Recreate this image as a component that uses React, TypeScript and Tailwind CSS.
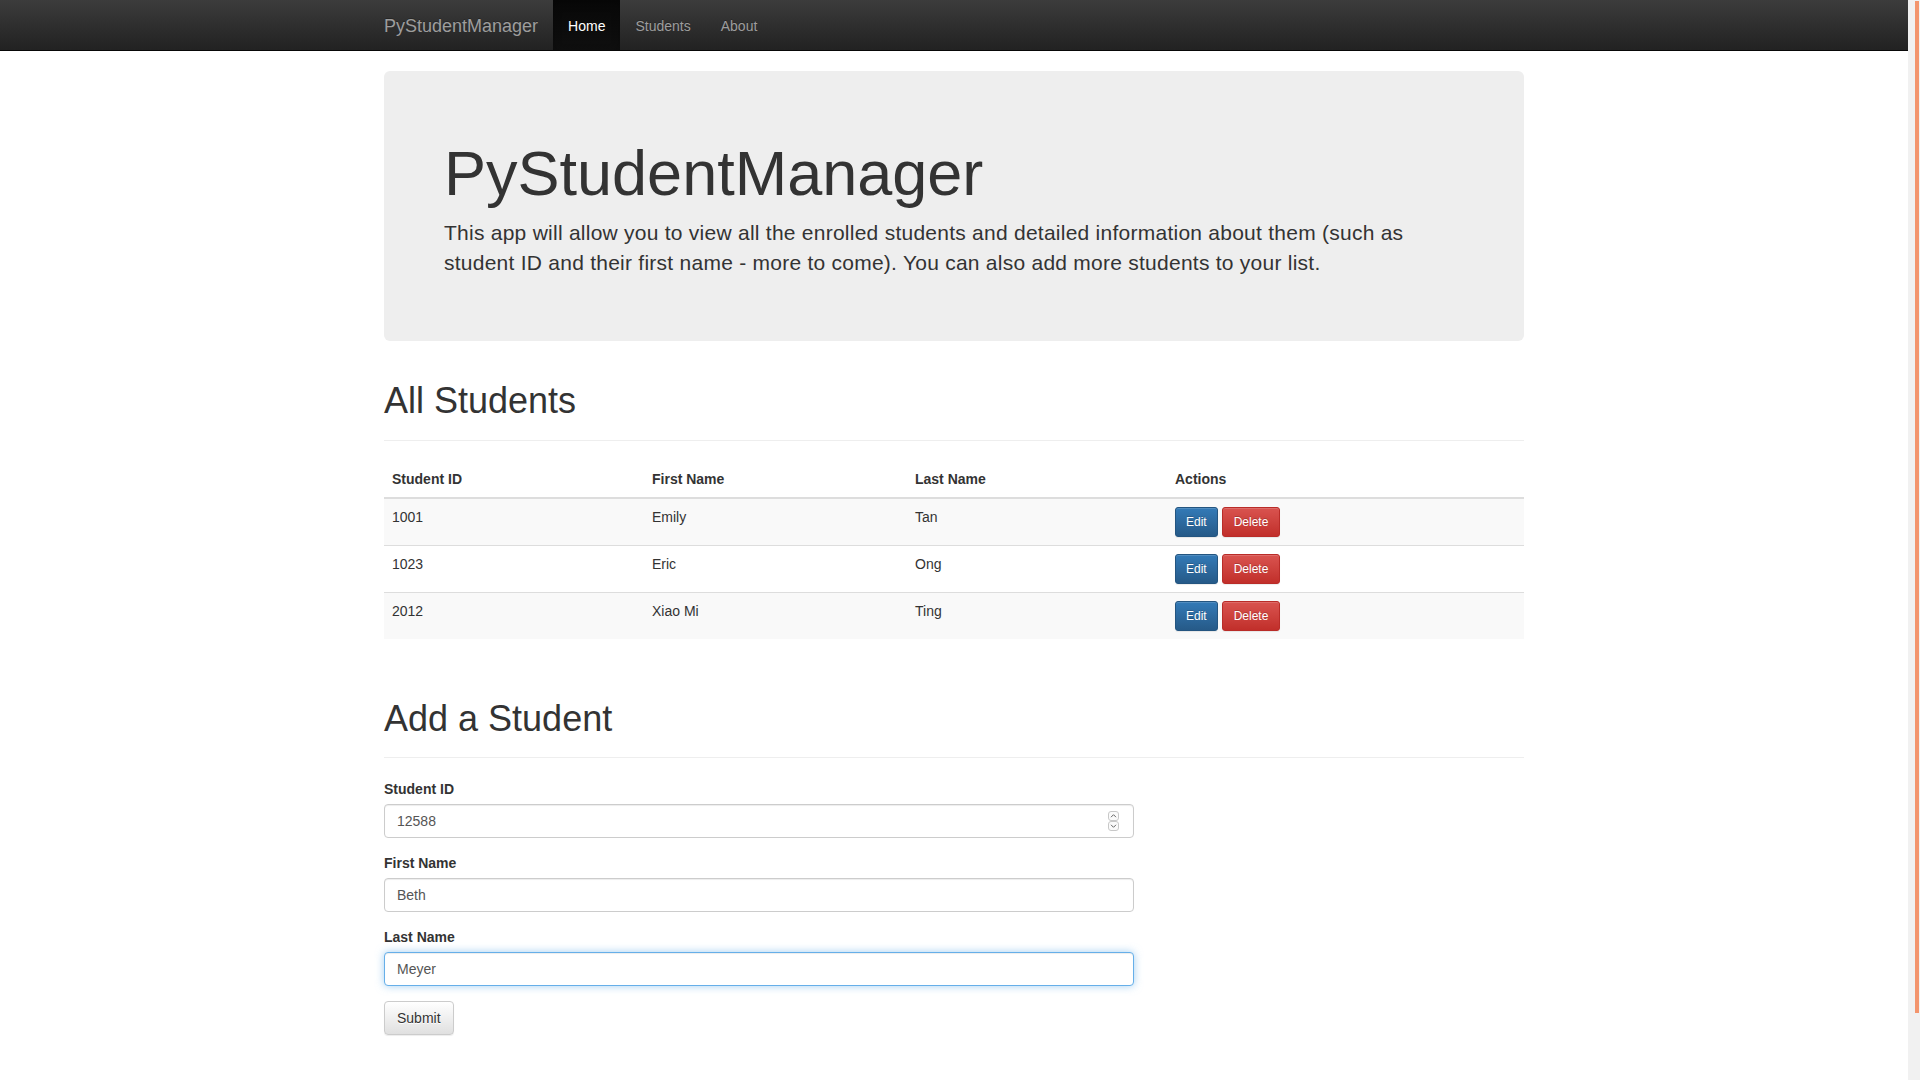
import React from 'react'

interface Student {
  id: number
  firstName: string
  lastName: string
}

const students: Student[] = [
  { id: 1001, firstName: 'Emily', lastName: 'Tan' },
  { id: 1023, firstName: 'Eric', lastName: 'Ong' },
  { id: 2012, firstName: 'Xiao Mi', lastName: 'Ting' },
]

const Spinner = () => (
  <svg width="11" height="20" viewBox="0 0 11 20" className="block">
    <rect x="0.5" y="0.5" width="10" height="9" rx="2.5" fill="#fafafa" stroke="#c8c8c8" />
    <rect x="0.5" y="10.5" width="10" height="9" rx="2.5" fill="#fafafa" stroke="#c8c8c8" />
    <path d="M3 6.2 L5.5 3.7 L8 6.2" fill="none" stroke="#666" strokeWidth="1" />
    <path d="M3 13.8 L5.5 16.3 L8 13.8" fill="none" stroke="#666" strokeWidth="1" />
  </svg>
)

export default function App() {
  return (
    <div className="flex h-screen overflow-hidden bg-white text-[14px] leading-[20px] text-[#333] font-['Liberation_Sans',Arial,sans-serif]">
      <div className="flex-1 min-w-0">
        {/* Navbar */}
        <nav className="h-[51px] border-b border-[#080808] bg-linear-to-b from-[#3c3c3c] to-[#222]">
          <div className="w-[1170px] mx-auto flex h-[50px]">
            <span className="px-[15px] pt-[16px] pb-[14px] text-[18px] leading-[20px] text-[#9d9d9d] [text-shadow:0_-1px_0_rgba(0,0,0,0.25)]">
              PyStudentManager
            </span>
            <span className="px-[15px] pt-[16px] pb-[14px] text-white bg-linear-to-b from-[#080808] to-[#0f0f0f] shadow-[inset_0_3px_9px_rgba(0,0,0,0.25)] [text-shadow:0_-1px_0_rgba(0,0,0,0.25)]">
              Home
            </span>
            <span className="px-[15px] pt-[16px] pb-[14px] text-[#9d9d9d] [text-shadow:0_-1px_0_rgba(0,0,0,0.25)]">Students</span>
            <span className="px-[15px] pt-[16px] pb-[14px] text-[#9d9d9d] [text-shadow:0_-1px_0_rgba(0,0,0,0.25)]">About</span>
          </div>
        </nav>

        <div className="w-[1170px] mx-auto px-[15px] pt-[20px]">
          {/* Jumbotron */}
          <div className="bg-[#eee] rounded-[6px] px-[60px] pt-[48px] pb-[48px]">
            <h1 className="mt-[20px] mb-[10px] text-[63px] leading-[1.1] font-medium text-[#333]">PyStudentManager</h1>
            <p className="mb-[15px] text-[21px] leading-[30px] font-extralight tracking-[0.25px]">
              This app will allow you to view all the enrolled students and detailed information about them (such as
              student ID and their first name - more to come). You can also add more students to your list.
            </p>
          </div>

          {/* All Students */}
          <div className="mt-[40px] pb-[9px] border-b border-[#eee]">
            <h1 className="mb-[10px] text-[36px] leading-[1.1] font-medium">All Students</h1>
          </div>

          <table className="mt-[20px] w-full table-fixed border-collapse">
            <thead>
              <tr>
                <th className="w-[260px] p-[8px] text-left font-bold border-b-2 border-[#ddd] align-bottom">Student ID</th>
                <th className="w-[263px] p-[8px] text-left font-bold border-b-2 border-[#ddd] align-bottom">First Name</th>
                <th className="w-[260px] p-[8px] text-left font-bold border-b-2 border-[#ddd] align-bottom">Last Name</th>
                <th className="p-[8px] text-left font-bold border-b-2 border-[#ddd] align-bottom">Actions</th>
              </tr>
            </thead>
            <tbody>
              {students.map((s, i) => (
                <tr key={s.id} className={i % 2 === 0 ? 'bg-[#f9f9f9]' : 'bg-white'}>
                  <td className="p-[8px] align-top border-t border-[#ddd]">{s.id}</td>
                  <td className="p-[8px] align-top border-t border-[#ddd]">{s.firstName}</td>
                  <td className="p-[8px] align-top border-t border-[#ddd]">{s.lastName}</td>
                  <td className="p-[8px] align-top border-t border-[#ddd]">
                    <div className="flex gap-[4px]">
                      <button className="h-[30px] px-[10px] text-[12px] leading-[18px] text-white rounded-[3px] border border-[#245580] bg-linear-to-b from-[#337ab7] to-[#265a88] [text-shadow:0_-1px_0_rgba(0,0,0,0.2)] shadow-[inset_0_1px_0_rgba(255,255,255,0.15),0_1px_1px_rgba(0,0,0,0.075)]">
                        Edit
                      </button>
                      <button className="h-[30px] px-[11px] text-[12px] leading-[18px] text-white rounded-[3px] border border-[#b92c28] bg-linear-to-b from-[#d9534f] to-[#c12e2a] [text-shadow:0_-1px_0_rgba(0,0,0,0.2)] shadow-[inset_0_1px_0_rgba(255,255,255,0.15),0_1px_1px_rgba(0,0,0,0.075)]">
                        Delete
                      </button>
                    </div>
                  </td>
                </tr>
              ))}
            </tbody>
          </table>

          {/* Add a Student */}
          <div className="mt-[60px] pb-[9px] border-b border-[#eee]">
            <h1 className="mb-[10px] text-[36px] leading-[1.1] font-medium">Add a Student</h1>
          </div>

          <form className="mt-[21px] w-[750px]" onSubmit={(e) => e.preventDefault()}>
            <div className="mb-[15px]">
              <label className="block mb-[5px] font-bold">Student ID</label>
              <div className="relative">
                <input
                  type="text"
                  defaultValue="12588"
                  className="block w-full h-[34px] px-[12px] py-[6px] text-[14px] text-[#555] bg-white border border-[#ccc] rounded-[4px] shadow-[inset_0_1px_1px_rgba(0,0,0,0.075)] outline-none"
                />
                <div className="absolute right-[15px] top-[7px]">
                  <Spinner />
                </div>
              </div>
            </div>
            <div className="mb-[15px]">
              <label className="block mb-[5px] font-bold">First Name</label>
              <input
                type="text"
                defaultValue="Beth"
                className="block w-full h-[34px] px-[12px] py-[6px] text-[14px] text-[#555] bg-white border border-[#ccc] rounded-[4px] shadow-[inset_0_1px_1px_rgba(0,0,0,0.075)] outline-none"
              />
            </div>
            <div className="mb-[15px]">
              <label className="block mb-[5px] font-bold">Last Name</label>
              <input
                type="text"
                defaultValue="Meyer"
                className="block w-full h-[34px] px-[12px] py-[6px] text-[14px] text-[#555] bg-white border border-[#66afe9] rounded-[4px] shadow-[inset_0_1px_1px_rgba(0,0,0,0.075),0_0_8px_rgba(102,175,233,0.6)] outline-none"
              />
            </div>
            <button
              type="submit"
              className="h-[34px] px-[12px] text-[14px] text-[#333] rounded-[4px] border border-[#ccc] bg-linear-to-b from-white to-[#e0e0e0] [text-shadow:0_1px_0_#fff] shadow-[inset_0_1px_0_rgba(255,255,255,0.15),0_1px_1px_rgba(0,0,0,0.075)]"
            >
              Submit
            </button>
          </form>
        </div>
      </div>

      {/* Scrollbar */}
      <div className="w-[12px] h-full bg-[#f1f1f1] pl-[7px] pr-[1px] pt-[1px]">
        <div className="h-[1012px] w-[4px] bg-[#f3956d]" />
      </div>
    </div>
  )
}
